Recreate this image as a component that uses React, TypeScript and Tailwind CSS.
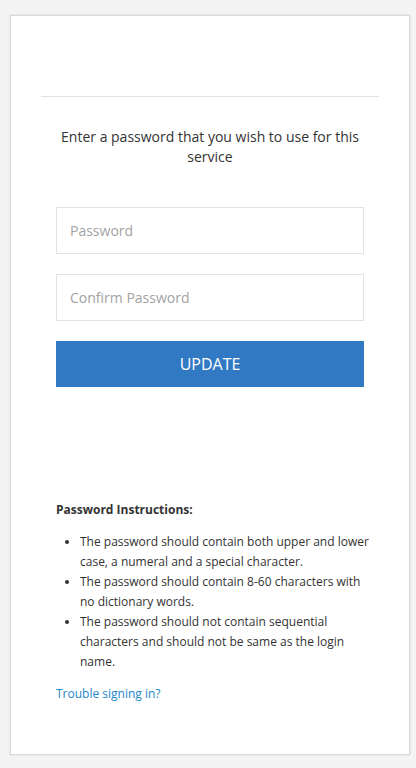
export default function App() {
  return (
    <div className="h-[768px] w-[416px] overflow-hidden bg-[#f4f4f4] pt-[15px]" style={{ fontFamily: '"Open Sans", "Noto Sans", sans-serif' }}>
      <div className="ml-[10px] h-[740px] w-[400px] border border-[#d9d9d9] bg-white shadow-[0_0_2px_rgba(0,0,0,0.12)]">
        <div className="h-[80px]" />
        <div className="mx-[30px] h-px bg-[#e2e2e2]" />
        <div className="mt-[30px] px-[46px] text-center text-[14px] leading-[20px] text-[#333]">
          Enter a password that you wish to use for this service
        </div>
        <div className="mx-[45px] mt-[40px] flex flex-col">
          <input
            type="password"
            placeholder="Password"
            className="h-[47px] w-full border border-[#e3e3e3] px-[13px] text-[14px] text-[#333] outline-none placeholder:text-[#a3a3a3]"
          />
          <input
            type="password"
            placeholder="Confirm Password"
            className="mt-[20px] h-[47px] w-full border border-[#e3e3e3] px-[13px] text-[14px] text-[#333] outline-none placeholder:text-[#a3a3a3]"
          />
          <button className="mt-[20px] h-[46px] w-full bg-[#3279c3] text-[16px] text-white">UPDATE</button>
        </div>
        <div className="ml-[45px] mr-[35px] mt-[113px] text-[12px] text-[#333]">
          <div className="font-bold leading-[20px]">Password Instructions:</div>
          <ul className="mt-[12px] list-disc pl-[24px] leading-[20px]">
            <li>The password should contain both upper and lower case, a numeral and a special character.</li>
            <li>The password should contain 8-60 characters with no dictionary words.</li>
            <li>The password should not contain sequential characters and should not be same as the login name.</li>
          </ul>
          <a href="#" className="mt-[12px] block leading-[20px] text-[#1d86c8]">Trouble signing in?</a>
        </div>
      </div>
    </div>
  );
}
